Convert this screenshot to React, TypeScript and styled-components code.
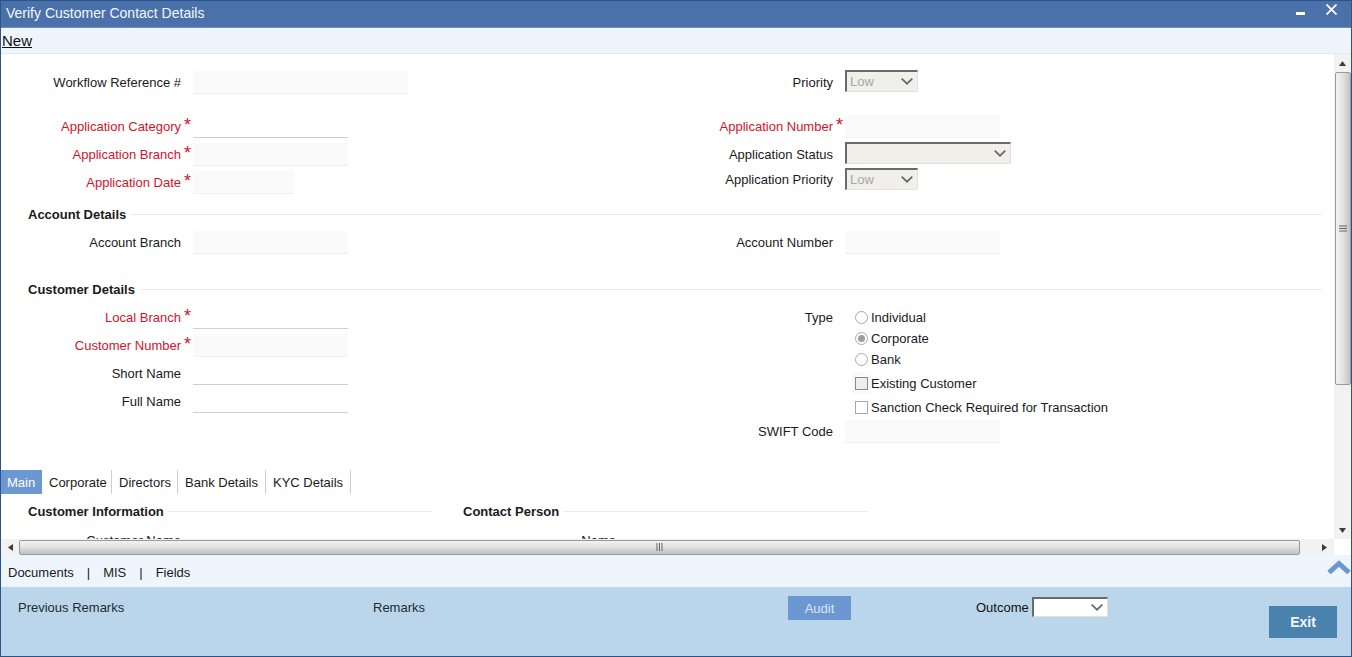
import React from "react";
import styled, { createGlobalStyle } from "styled-components";

const Global = createGlobalStyle`
  html, body { margin: 0; padding: 0; background: #fff; overflow: hidden; }
  * { box-sizing: border-box; }
  body { font-family: "Liberation Sans", Arial, sans-serif; font-size: 13px; color: #1a1a1a; }
`;

const Window = styled.div`
  width: 1352px; height: 657px; display: flex; flex-direction: column;
  border: 1px solid #2b5488; background: #fff; overflow: hidden;
`;
const TitleBar = styled.header`
  height: 27px; flex: none; display: flex; align-items: flex-start; justify-content: space-between;
  background: #4a71a9; color: #f4f7fb; padding: 4px 14px 0 5px; border-bottom: 1px solid #6f8fb8; font-size: 14px;
`;
const WindowButtons = styled.div`display: flex; align-items: flex-start; gap: 20px; margin-top: -1px;`;
const Toolbar = styled.div`
  height: 26px; flex: none; background: #eef5fd; border-bottom: 1px solid #e6e8ea;
  padding-left: 0; font-size: 15px; line-height: 25px;
`;
const NewLink = styled.a`color: #111; text-decoration: underline; margin-left: 1px;`;

const Middle = styled.div`height: 485px; flex: none; display: flex;`;
const Content = styled.main`flex: 1; min-width: 0; overflow: hidden; padding-top: 17px;`;

const TwoCol = styled.section<{ $top?: number }>`
  display: grid; grid-template-columns: 649px 1fr; margin-top: ${p => p.$top ?? 0}px;
`;
const Col = styled.div<{ $top?: number }>`display: flex; flex-direction: column; margin-top: ${p => p.$top ?? 0}px;`;
const Row = styled.div<{ $top?: number; $h?: number }>`
  display: flex; align-items: center; height: ${p => p.$h ?? 22}px; margin-top: ${p => p.$top ?? 0}px;
`;
const Label = styled.label<{ $w: number; $req?: boolean }>`
  width: ${p => p.$w}px; flex: none; text-align: right; white-space: nowrap; padding-top: 1px;
  color: ${p => (p.$req ? "#d0142c" : "#1a1a1a")};
`;
const TopLabel = styled(Label)`padding-top: 0;`;
const Star = styled.span`
  width: 12px; flex: none; padding-left: 3px; color: #d0142c; font-size: 18px; line-height: 18px;
  align-self: flex-start; padding-top: 1px;
`;
const Input = styled.div<{ $w: number; $editable?: boolean }>`
  width: ${p => p.$w}px; height: 23px; flex: none; align-self: flex-start;
  background: ${p => (p.$editable ? "#fff" : "#fafafa")};
  border-bottom: 1px solid ${p => (p.$editable ? "#cfcfcf" : "#f0f0f0")};
`;
const SelectBox = styled.div<{ $w: number; $h?: number; $light?: boolean }>`
  width: ${p => p.$w}px; height: ${p => p.$h ?? 22}px; flex: none; align-self: flex-start;
  display: flex; align-items: center; justify-content: space-between;
  padding: 0 4px 0 3px; color: #a8a8a8;
  background: ${p => (p.$light ? "#fff" : "#f0efea")};
  border-style: solid; border-width: 2px 1px 1px 2px;
  border-color: #6a6a6a #e2e2de #e2e2de #6a6a6a;
`;
const Legend = styled.div<{ $top?: number; $w?: number; $lead?: number }>`
  display: flex; align-items: center; height: 20px; margin-top: ${p => p.$top ?? 0}px;
  width: ${p => (p.$w ? `${p.$w}px` : "auto")}; font-weight: bold; flex: none;
  padding-left: ${p => p.$lead ?? 27}px; padding-right: ${p => (p.$w ? 0 : 12)}px;
  &::after { content: ""; flex: 1; height: 1px; background: #ececec; margin-left: 4px; }
`;
const Choice = styled.div`display: flex; align-items: center; height: 100%; margin-left: 10px; gap: 3px;`;
const ChoiceRow = styled(Row)`padding-left: 195px;`;
const Radio = styled.span<{ $on?: boolean }>`
  width: 13px; height: 13px; border-radius: 50%; border: 1px solid #a9a9a9; background: #fff; flex: none;
  display: flex; align-items: center; justify-content: center;
  &::after { content: ""; width: 7px; height: 7px; border-radius: 50%; background: ${p => (p.$on ? "#9d9d9d" : "transparent")}; }
`;
const CheckCell = styled.span<{ $shade?: boolean }>`
  width: 19px; height: 22px; margin-left: -3px; margin-right: -3px; display: flex; align-items: center; justify-content: center; flex: none;
  background: ${p => (p.$shade ? "#fafafa" : "transparent")};
`;
const Check = styled.span<{ $shade?: boolean }>`
  width: 13px; height: 13px; border: 1px solid ${p => (p.$shade ? "#8a8a8a" : "#a9a9a9")};
  background: ${p => (p.$shade ? "#eeeeee" : "#fff")}; flex: none;
`;
const Tabs = styled.nav`display: flex; height: 24px; margin-top: 28px;`;
const Tab = styled.a<{ $active?: boolean; $w: number }>`
  width: ${p => p.$w}px; padding-left: ${p => (p.$active ? 6 : 7)}px; line-height: 25px; flex: none; white-space: nowrap;
  color: ${p => (p.$active ? "#fff" : "#1a1a1a")};
  background: ${p => (p.$active ? "#6b97d3" : "transparent")};
  border-right: ${p => (p.$active ? "0" : "1px solid #cfcfcf")};
`;
const SubCols = styled.div`display: flex; margin-top: 7px;`;
const SubCol = styled.div<{ $w: number }>`width: ${p => p.$w}px; flex: none;`;

const VScroll = styled.div`
  width: 17px; flex: none; display: flex; flex-direction: column; align-items: center; background: #f2f2f2;
`;
const ArrowCell = styled.div`height: 18px; width: 100%; flex: none; display: flex; align-items: center; justify-content: center;`;
const VThumb = styled.div`
  width: 16px; height: 313px; margin-right: -1px; flex: none; display: flex; align-items: center; justify-content: center;
  border: 1px solid #9a9a9a; border-radius: 2px;
  background: linear-gradient(90deg, #f2f2f2 0%, #e4e4e4 45%, #c4c4c4 100%);
`;
const VTrack = styled.div`flex: 1;`;
const HScroll = styled.div`height: 16px; flex: none; display: flex; align-items: center; background: #f2f2f2;`;
const HArrowCell = styled.div`width: 18px; height: 100%; flex: none; display: flex; align-items: center; justify-content: center;`;
const HThumb = styled.div`
  width: 1281px; height: 15px; flex: none; display: flex; align-items: center; justify-content: center;
  border: 1px solid #9a9a9a; border-radius: 2px;
  background: linear-gradient(180deg, #f2f2f2 0%, #e2e2e2 45%, #c0c0c0 100%);
`;
const HTrack = styled.div`flex: 1; display: flex; justify-content: flex-end; padding-right: 5px;`;
const Corner = styled.div`width: 17px; height: 100%; flex: none; background: #fff;`;

const DocBar = styled.div`
  height: 32px; flex: none; background: #eef5fd; display: flex; align-items: center; justify-content: space-between;
  padding-left: 7px; padding-top: 3px;
`;
const DocLinks = styled.div`display: flex; gap: 13px;`;
const Chevron = styled.svg`margin-top: -12px; flex: none;`;

const Footer = styled.footer`
  flex: 1; background: #bbd6eb; display: grid; padding-left: 17px;
  grid-template-columns: 355px 415px 188px 293px 68px; align-items: start;
`;
const FooterText = styled.span`margin-top: 13px; color: #1f2a33;`;
const Audit = styled.button`
  margin: 9px 0 0; width: 63px; height: 24px; border: 0; background: #6b97d3; padding: 1px 0 0;
  color: #dfe6ee; font: 13px "Liberation Sans", Arial, sans-serif;
`;
const OutcomeBox = styled.div`display: flex; align-items: flex-start; gap: 3px; padding-top: 10px;`;
const OutcomeLabel = styled.span`padding-top: 3px; color: #111;`;
const Exit = styled.button`
  margin: 19px 0 0; width: 68px; height: 32px; border: 0; background: #4a82ae; padding: 0;
  color: #f4f8fb; font: bold 14px "Liberation Sans", Arial, sans-serif;
`;

const Caret = () => (
  <svg width="12" height="7" viewBox="0 0 12 7"><path d="M.7.7l5.3 5 5.3-5" fill="none" stroke="#6a6a6a" strokeWidth="1.8" /></svg>
);
const Grip = ({ vertical }: { vertical?: boolean }) => (
  <svg width="8" height="8" viewBox="0 0 8 8">
    {vertical ? (
      <path d="M0 1h8M0 3.5h8M0 6h8" stroke="#666" strokeWidth="1" />
    ) : (
      <path d="M1 0v8M3.5 0v8M6 0v8" stroke="#666" strokeWidth="1" />
    )}
  </svg>
);
const Tri = ({ d }: { d: string }) => (
  <svg width="9" height="9" viewBox="0 0 9 9"><path d={d} fill="#3c3c3c" /></svg>
);

const Field = ({ label, w, req, labelW, editable }: { label: string; w: number; req?: boolean; labelW: number; editable?: boolean }) => (
  <>
    <Label $w={labelW} $req={req}>{label}</Label>
    <Star>{req ? "*" : ""}</Star>
    <Input $w={w} $editable={editable} />
  </>
);

export default function App() {
  return (
    <Window>
      <Global />
      <TitleBar>
        <span>Verify Customer Contact Details</span>
        <WindowButtons>
          <svg width="10" height="11" viewBox="0 0 10 11"><rect y="8" width="9" height="3" fill="#fff" /></svg>
          <svg width="11" height="11" viewBox="0 0 11 11"><path d="M.5.5l10 10M10.5.5l-10 10" stroke="#fff" strokeWidth="1.8" /></svg>
        </WindowButtons>
      </TitleBar>
      <Toolbar><NewLink>New</NewLink></Toolbar>
      <Middle>
        <Content>
          <TwoCol>
            <Col>
              <Row><Field label="Workflow Reference #" labelW={180} w={215} /></Row>
              <Row $top={22}><Field req label="Application Category" labelW={180} w={155} editable /></Row>
              <Row $top={6}><Field req label="Application Branch" labelW={180} w={155} /></Row>
              <Row $top={6}><Field req label="Application Date" labelW={180} w={101} /></Row>
            </Col>
            <Col $top={-1}>
              <Row $h={24}>
                <Label $w={183}>Priority</Label><Star />
                <SelectBox $w={73}>Low<Caret /></SelectBox>
              </Row>
              <Row $top={21}><Field req label="Application Number" labelW={183} w={155} /></Row>
              <Row $top={5} $h={24}>
                <TopLabel $w={183}>Application Status</TopLabel><Star />
                <SelectBox $w={166}><span /><Caret /></SelectBox>
              </Row>
              <Row $top={2}>
                <TopLabel $w={183}>Application Priority</TopLabel><Star />
                <SelectBox $w={73}>Low<Caret /></SelectBox>
              </Row>
            </Col>
          </TwoCol>
          <Legend $top={11}>Account Details</Legend>
          <TwoCol $top={7}>
            <Row><Field label="Account Branch" labelW={180} w={155} /></Row>
            <Row><Field label="Account Number" labelW={183} w={155} /></Row>
          </TwoCol>
          <Legend $top={26}>Customer Details</Legend>
          <TwoCol $top={7}>
            <Col>
              <Row><Field req label="Local Branch" labelW={180} w={155} editable /></Row>
              <Row $top={6}><Field req label="Customer Number" labelW={180} w={155} /></Row>
              <Row $top={6}><Field label="Short Name" labelW={180} w={155} editable /></Row>
              <Row $top={6}><Field label="Full Name" labelW={180} w={155} editable /></Row>
            </Col>
            <Col $top={1}>
              <Row $h={21}>
                <TopLabel $w={183}>Type</TopLabel><Star />
                <Choice><Radio />Individual</Choice>
              </Row>
              <ChoiceRow $h={21}><Choice><Radio $on />Corporate</Choice></ChoiceRow>
              <ChoiceRow $h={21}><Choice><Radio />Bank</Choice></ChoiceRow>
              <ChoiceRow $top={2}><Choice><CheckCell $shade><Check $shade /></CheckCell>Existing Customer</Choice></ChoiceRow>
              <ChoiceRow $top={2}><Choice><CheckCell><Check /></CheckCell>Sanction Check Required for Transaction</Choice></ChoiceRow>
              <Row $top={2}><Field label="SWIFT Code" labelW={183} w={155} /></Row>
            </Col>
          </TwoCol>
          <Tabs>
            <Tab $active $w={41}>Main</Tab>
            <Tab $w={70}>Corporate</Tab>
            <Tab $w={66}>Directors</Tab>
            <Tab $w={88}>Bank Details</Tab>
            <Tab $w={85}>KYC Details</Tab>
          </Tabs>
          <SubCols>
            <SubCol $w={440}>
              <Legend $w={431}>Customer Information</Legend>
              <Row $top={8}><Label $w={180}>Customer Name</Label></Row>
            </SubCol>
            <SubCol $w={427}>
              <Legend $w={427} $lead={22}>Contact Person</Legend>
              <Row $top={8}><Label $w={175}>Name</Label></Row>
            </SubCol>
          </SubCols>
        </Content>
        <VScroll>
          <ArrowCell><Tri d="M4.5 2L8 7H1z" /></ArrowCell>
          <VThumb><Grip vertical /></VThumb>
          <VTrack />
          <ArrowCell><Tri d="M4.5 7L1 2h7z" /></ArrowCell>
        </VScroll>
      </Middle>
      <HScroll>
        <HArrowCell><Tri d="M2 4.5L7 1v7z" /></HArrowCell>
        <HThumb><Grip /></HThumb>
        <HTrack><Tri d="M7 4.5L2 8V1z" /></HTrack>
        <Corner />
      </HScroll>
      <DocBar>
        <DocLinks>
          <span>Documents</span><span>|</span><span>MIS</span><span>|</span><span>Fields</span>
        </DocLinks>
        <Chevron width="24" height="14" viewBox="0 0 24 14">
          <path d="M2 12.5l10-9 10 9" fill="none" stroke="#6a96d2" strokeWidth="5" />
        </Chevron>
      </DocBar>
      <Footer>
        <FooterText>Previous Remarks</FooterText>
        <FooterText>Remarks</FooterText>
        <Audit>Audit</Audit>
        <OutcomeBox>
          <OutcomeLabel>Outcome</OutcomeLabel>
          <SelectBox $w={76} $h={20} $light><span /><Caret /></SelectBox>
        </OutcomeBox>
        <Exit>Exit</Exit>
      </Footer>
    </Window>
  );
}
